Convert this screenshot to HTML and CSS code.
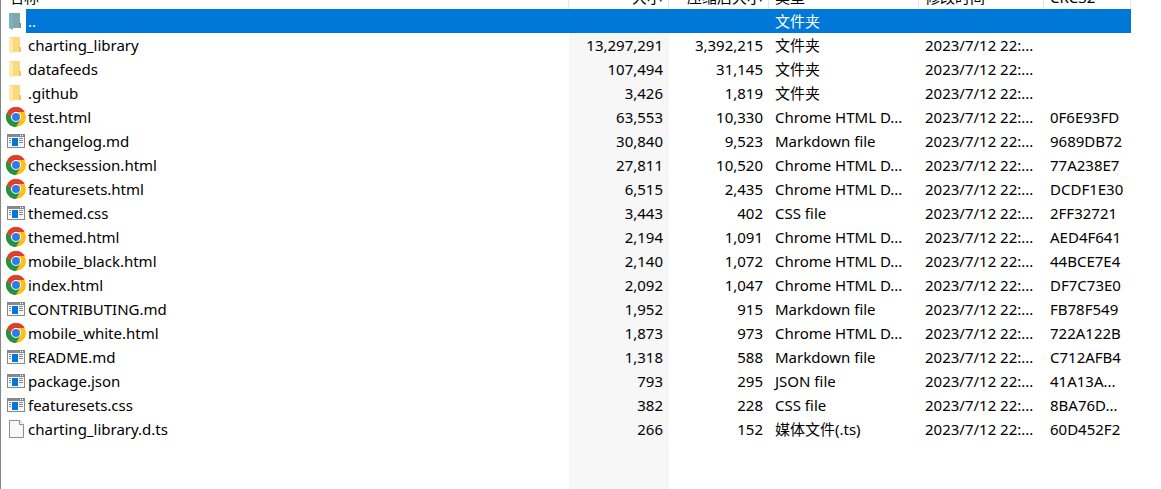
FILE: index.html
```html
<!DOCTYPE html>
<html lang="zh-CN">
<head>
    <meta charset="UTF-8">
    <meta name="viewport" content="width=device-width, initial-scale=1.0">
    <title>charting_library</title>
    <link rel="stylesheet" href="styles.css">
</head>
<body>
    <!-- Icon shapes shared by the rows -->
    <svg class="sprite" aria-hidden="true">
        <symbol id="folder" viewBox="0 0 20 20">
            <path class="folder-back" d="M4 2h10v10h1v5H4z"/>
            <path class="folder-side" d="M13 12h2v5h-2z"/>
            <path class="folder-front" d="M3 2l4 2v15l-4-2z"/>
        </symbol>
        <symbol id="chrome" viewBox="0 0 20 20">
            <circle cx="10" cy="10" r="10" fill="#fbc116"/>
            <path d="M1.3 5A10 10 0 0 1 18.7 5H10L5.7 12.5z" fill="#e33b2e"/>
            <path d="M1.3 5A10 10 0 0 0 10 20L14.3 12.5H5.7z" fill="#229342"/>
            <circle cx="10" cy="10" r="5" fill="#fff"/>
            <circle cx="10" cy="10" r="4" fill="#2b7de9"/>
        </symbol>
        <symbol id="app" viewBox="0 0 20 20">
            <path d="M1 3h18v14H1z" fill="#858a8f"/>
            <path d="M2 6h16v10H2z" fill="#f7f7f7"/>
            <path d="M6 7h6v8H6z" fill="#0078d7"/>
            <path d="M3 7h2v1H3zM3 9h2v1H3zM3 11h2v1H3zM13 7h4v1h-4zM13 9h4v1h-4zM13 11h4v1h-4z" fill="#85888c"/>
            <path d="M14 4h1v1h-1zM16 4h1v1h-1z" fill="#fff"/>
        </symbol>
        <symbol id="file" viewBox="0 0 20 20">
            <path d="M3.5 1.5h10l4 4v13h-14z" fill="#f9f9f9" stroke="#8c8c8c"/>
            <path d="M13.5 1.5v4h4" fill="#fff" stroke="#8c8c8c"/>
        </symbol>
    </svg>

    <main class="file-list">
        <table>
            <colgroup>
                <col>
                <col class="col-size">
                <col class="col-packed">
                <col class="col-type">
                <col class="col-date">
                <col class="col-crc">
            </colgroup>
            <thead>
                <tr><th class="title">名称</th><th class="num">大小</th><th class="num">压缩后大小</th><th>类型</th><th>修改时间</th><th>CRC32</th></tr>
            </thead>
            <tbody>
                <tr class="selected"><td class="name"><svg class="icon"><use href="#folder"/></svg><span>..</span></td><td></td><td></td><td>文件夹</td><td></td><td></td></tr>
                <tr><td class="name"><svg class="icon"><use href="#folder"/></svg><span>charting_library</span></td><td class="num">13,297,291</td><td class="num">3,392,215</td><td>文件夹</td><td>2023/7/12 22:...</td><td></td></tr>
                <tr><td class="name"><svg class="icon"><use href="#folder"/></svg><span>datafeeds</span></td><td class="num">107,494</td><td class="num">31,145</td><td>文件夹</td><td>2023/7/12 22:...</td><td></td></tr>
                <tr><td class="name"><svg class="icon"><use href="#folder"/></svg><span>.github</span></td><td class="num">3,426</td><td class="num">1,819</td><td>文件夹</td><td>2023/7/12 22:...</td><td></td></tr>
                <tr><td class="name"><svg class="icon"><use href="#chrome"/></svg><span>test.html</span></td><td class="num">63,553</td><td class="num">10,330</td><td>Chrome HTML D...</td><td>2023/7/12 22:...</td><td>0F6E93FD</td></tr>
                <tr><td class="name"><svg class="icon"><use href="#app"/></svg><span>changelog.md</span></td><td class="num">30,840</td><td class="num">9,523</td><td>Markdown file</td><td>2023/7/12 22:...</td><td>9689DB72</td></tr>
                <tr><td class="name"><svg class="icon"><use href="#chrome"/></svg><span>checksession.html</span></td><td class="num">27,811</td><td class="num">10,520</td><td>Chrome HTML D...</td><td>2023/7/12 22:...</td><td>77A238E7</td></tr>
                <tr><td class="name"><svg class="icon"><use href="#chrome"/></svg><span>featuresets.html</span></td><td class="num">6,515</td><td class="num">2,435</td><td>Chrome HTML D...</td><td>2023/7/12 22:...</td><td>DCDF1E30</td></tr>
                <tr><td class="name"><svg class="icon"><use href="#app"/></svg><span>themed.css</span></td><td class="num">3,443</td><td class="num">402</td><td>CSS file</td><td>2023/7/12 22:...</td><td>2FF32721</td></tr>
                <tr><td class="name"><svg class="icon"><use href="#chrome"/></svg><span>themed.html</span></td><td class="num">2,194</td><td class="num">1,091</td><td>Chrome HTML D...</td><td>2023/7/12 22:...</td><td>AED4F641</td></tr>
                <tr><td class="name"><svg class="icon"><use href="#chrome"/></svg><span>mobile_black.html</span></td><td class="num">2,140</td><td class="num">1,072</td><td>Chrome HTML D...</td><td>2023/7/12 22:...</td><td>44BCE7E4</td></tr>
                <tr><td class="name"><svg class="icon"><use href="#chrome"/></svg><span>index.html</span></td><td class="num">2,092</td><td class="num">1,047</td><td>Chrome HTML D...</td><td>2023/7/12 22:...</td><td>DF7C73E0</td></tr>
                <tr><td class="name"><svg class="icon"><use href="#app"/></svg><span>CONTRIBUTING.md</span></td><td class="num">1,952</td><td class="num">915</td><td>Markdown file</td><td>2023/7/12 22:...</td><td>FB78F549</td></tr>
                <tr><td class="name"><svg class="icon"><use href="#chrome"/></svg><span>mobile_white.html</span></td><td class="num">1,873</td><td class="num">973</td><td>Chrome HTML D...</td><td>2023/7/12 22:...</td><td>722A122B</td></tr>
                <tr><td class="name"><svg class="icon"><use href="#app"/></svg><span>README.md</span></td><td class="num">1,318</td><td class="num">588</td><td>Markdown file</td><td>2023/7/12 22:...</td><td>C712AFB4</td></tr>
                <tr><td class="name"><svg class="icon"><use href="#app"/></svg><span>package.json</span></td><td class="num">793</td><td class="num">295</td><td>JSON file</td><td>2023/7/12 22:...</td><td>41A13A...</td></tr>
                <tr><td class="name"><svg class="icon"><use href="#app"/></svg><span>featuresets.css</span></td><td class="num">382</td><td class="num">228</td><td>CSS file</td><td>2023/7/12 22:...</td><td>8BA76D...</td></tr>
                <tr><td class="name"><svg class="icon"><use href="#file"/></svg><span>charting_library.d.ts</span></td><td class="num">266</td><td class="num">152</td><td>媒体文件(.ts)</td><td>2023/7/12 22:...</td><td>60D452F2</td></tr>
                <!-- takes the rest of the window so the sorted column stays shaded -->
                <tr class="rest"><td></td><td></td><td></td><td></td><td></td><td></td></tr>
            </tbody>
        </table>
    </main>
</body>
</html>
```
FILE: styles.css
```css
* {
    margin: 0;
    padding: 0;
    box-sizing: border-box;
}

body {
    background: #fff;
    color: #000;
    font: 15px/24px 'Noto Sans', 'Noto Sans CJK SC', sans-serif;
    overflow: hidden;
}

.sprite {
    display: none;
}

.file-list {
    height: 100vh;
    padding-right: 30px;
    border-left: 1px solid #828790;
    overflow: hidden;
}

/* the header is scrolled partly out of view */
table {
    width: 100%;
    height: calc(100vh + 15px);
    margin-top: -15px;
    border-collapse: separate;
    border-spacing: 0;
    table-layout: fixed;
}

.col-size {
    width: 100px;
    background: #f7f7f7;
}

.col-packed {
    width: 100px;
}

.col-type {
    width: 150px;
}

.col-date {
    width: 125px;
}

.col-crc {
    width: 87px;
}

th,
td {
    height: 24px;
    padding: 0 6px;
    text-align: left;
    white-space: nowrap;
}

th {
    background: #fff;
    border-right: 1px solid #e5e5e5;
    font-weight: normal;
}

.title {
    padding-left: 8px;
}

.num {
    text-align: right;
}

.name {
    display: flex;
    align-items: center;
    padding: 0;
}

.name span {
    flex: 1;
    padding-left: 2px;
}

.icon {
    width: 20px;
    height: 20px;
    margin-left: 5px;
}

.folder-back {
    fill: var(--folder-back, #f9da80);
}

.folder-side {
    fill: var(--folder-side, #efc75e);
}

.folder-front {
    fill: var(--folder-front, #ffeaa9);
}

.selected td {
    background: #0078d7;
    color: #fff;
}

.selected .name {
    background: #fff;
}

.selected .name span {
    background: #0078d7;
}

/* selection tint over the folder */
.selected .icon {
    --folder-back: #7da9ab;
    --folder-side: #6f9a97;
    --folder-front: #80b1c0;
}

.rest td {
    height: auto;
}
```
